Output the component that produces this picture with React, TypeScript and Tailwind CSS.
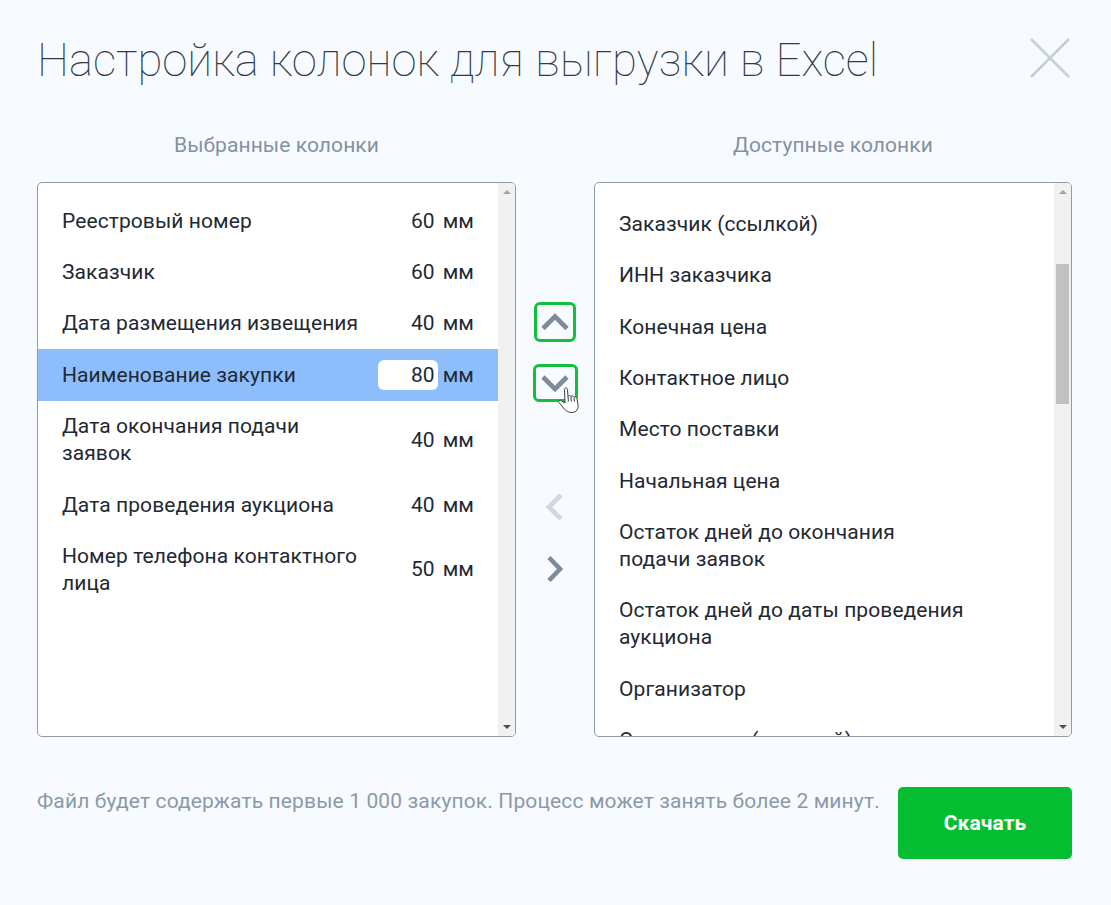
const selected = [
  { name: 'Реестровый номер', mm: 60 },
  { name: 'Заказчик', mm: 60 },
  { name: 'Дата размещения извещения', mm: 40 },
  { name: 'Наименование закупки', mm: 80, active: true },
  { name: 'Дата окончания подачи заявок', mm: 40 },
  { name: 'Дата проведения аукциона', mm: 40 },
  { name: 'Номер телефона контактного лица', mm: 50 },
];

const available = [
  'Заказ на площадке',
  'Заказчик (ссылкой)',
  'ИНН заказчика',
  'Конечная цена',
  'Контактное лицо',
  'Место поставки',
  'Начальная цена',
  'Остаток дней до окончания подачи заявок',
  'Остаток дней до даты проведения аукциона',
  'Организатор',
  'Организатор (ссылкой)',
];

function Scrollbar({ thumb }: { thumb?: boolean }) {
  return (
    <div className="w-[17px] shrink-0 bg-[#f1f1f1] flex flex-col items-center justify-between py-[7px]">
      <div className="w-0 h-0 border-x-[4px] border-x-transparent border-b-[4px] border-b-[#a3a3a3]" />
      {thumb && <div className="w-[13px] h-[140px] bg-[#c1c1c1] mb-[252px]" />}
      <div className="w-0 h-0 border-x-[4px] border-x-transparent border-t-[4px] border-t-[#505050]" />
    </div>
  );
}

function Chevron({ d, color }: { d: string; color: string }) {
  return (
    <svg width="30" height="30" viewBox="0 0 30 30" fill="none">
      <path d={d} stroke={color} strokeWidth="4.6" />
    </svg>
  );
}

function Hand() {
  return (
    <svg className="absolute left-[22px] top-[20px]" width="23" height="27" viewBox="0 0 23 27">
      <path
        d="M6.500 2.500c0-2 3-2 3 0l.5 7c.5-1.500 2.700-1.200 3 .3.600-1.200 2.800-1 3 .6.800-1 2.800-.5 3 1.200l1 6c.5 3.500-1 7.900-6 7.900-3.500 0-6-1.500-7.500-3.400L1 15.500c-1-1.500.8-3 2.300-1.800L7 16z"
        fill="#fff"
        stroke="#3c3c3c"
        strokeWidth="1"
        strokeLinejoin="round"
      />
      <path d="M10 9.500l.4 5M13 10l.4 4.600M16 11l.4 3.600" stroke="#3c3c3c" strokeWidth="1" />
    </svg>
  );
}

export default function App() {
  return (
    <div className="w-[1111px] h-[905px] overflow-hidden bg-[#f7faff] pl-[37px] pr-[39px] font-['Roboto',sans-serif] text-[21px] leading-[27px] tracking-[0.08px] text-[#1f2933]">
      <div className="flex items-start justify-between h-[124px] pt-[32px]">
        <h1 className="text-[45.500px] leading-[58px] font-thin tracking-normal text-[#2f3a45]">
          Настройка колонок для выгрузки в Excel
        </h1>
        <svg className="mt-[5px] mr-[1px]" width="42" height="42" viewBox="0 0 42 42" fill="none">
          <path d="M2 2l38 38M40 2L2 40" stroke="#c4d0da" strokeWidth="2.600" />
        </svg>
      </div>

      <div className="flex h-[58px] text-[#84929f]">
        <div className="w-[479px] text-center leading-[42px]">Выбранные колонки</div>
        <div className="w-[78px]" />
        <div className="w-[478px] text-center leading-[42px]">Доступные колонки</div>
      </div>

      <div className="flex h-[555px]">
        <div className="w-[479px] flex border border-[#8f9ba6] rounded-[5px] bg-white overflow-hidden">
          <div className="flex-1 pt-[12px]">
            {selected.map((row) => (
              <div
                key={row.name}
                className={`flex items-center pl-[24px] pr-[24px] pt-[12.700px] pb-[11.700px] ${row.active ? 'bg-[#8dbdfb]' : ''}`}
              >
                <div className="w-[300px]">{row.name}</div>
                <div className="flex-1 flex justify-end items-center gap-[5px]">
                  <div className={`text-right pr-[3px] rounded-[6px] ${row.active ? 'w-[60px] h-[30px] -my-[2px] bg-white leading-[30px]' : ''}`}>
                    {row.mm}
                  </div>
                  <div>мм</div>
                </div>
              </div>
            ))}
          </div>
          <Scrollbar />
        </div>

        <div className="relative w-[78px] flex flex-col items-center pt-[120px]">
          <div className="w-[42px] h-[40px] border-[3px] border-[#12c03c] rounded-[6px] flex items-center justify-center">
            <Chevron d="M3 21.500L15 9.500l12 12" color="#7f8b99" />
          </div>
          <div className="relative w-[45px] h-[38px] mt-[22px] border-[3px] border-[#12c03c] rounded-[6px] flex items-center justify-center">
            <Chevron d="M3 9l12 12 12-12" color="#7f8b99" />
            <Hand />
          </div>
          <div className="mt-[90px]">
            <Chevron d="M21 3L9 15l12 12" color="#d1d8df" />
          </div>
          <div className="mt-[32px]">
            <Chevron d="M9 3.500L20 15 9 26.500" color="#7f8b99" />
          </div>
        </div>

        <div className="w-[478px] flex border border-[#8f9ba6] rounded-[5px] bg-white overflow-hidden">
          <div className="flex-1 overflow-hidden">
            <div className="-mt-[35.700px]">
              {available.map((name) => (
                <div key={name} className="pl-[24px] pr-[85px] py-[12.175px]">
                  {name}
                </div>
              ))}
            </div>
          </div>
          <Scrollbar thumb />
        </div>
      </div>

      <div className="flex justify-between mt-[50px]">
        <p className="text-[21px] tracking-[0.13px] pt-[1px] text-[#8c9aa8]">
          Файл будет содержать первые 1 000 закупок. Процесс может занять более 2 минут.
        </p>
        <button className="w-[174px] h-[72px] rounded-[5px] bg-[#04bd30] text-white font-bold text-[21px]">
          Скачать
        </button>
      </div>
    </div>
  );
}
